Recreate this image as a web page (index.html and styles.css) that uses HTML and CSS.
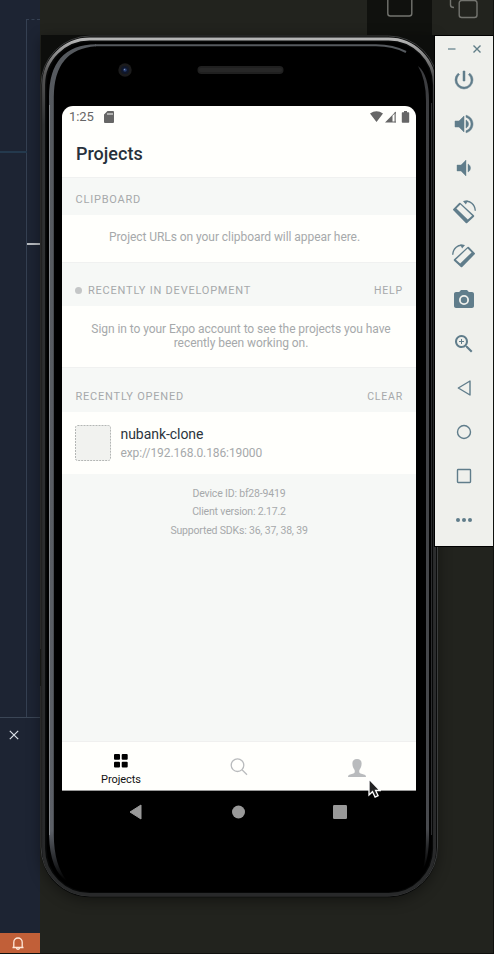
FILE: index.html
```html
<!DOCTYPE html>
<html lang="en">
<head>
<meta charset="utf-8">
<title>Emulator</title>
<link rel="stylesheet" href="styles.css">
</head>
<body>
<div class="desktop">
  <aside class="side">
    <div class="side-main"><div class="minimap"></div><i class="line"></i><i class="cursor-line"></i></div>
    <div class="side-panel">
      <svg class="close" width="10" height="10" viewBox="0 0 10 10"><path d="M.8.8l8.400 8.400M9.200.8L.8 9.200"/></svg>
    </div>
    <div class="side-status">
      <svg width="14" height="15" viewBox="0 0 14 15"><path d="M1.500 11.500h11M2.800 11.300V6.200a4.200 4.200 0 0 1 8.400 0v5.100M5.500 12.200c.3 1.600 2.700 1.600 3 0"/></svg>
    </div>
  </aside>
  <div class="topbar">
    <svg width="127" height="36" viewBox="0 0 127 36"><path class="dark" d="M0 0h65v36H0z"/><rect x="20.800" y="-8" width="24" height="24" rx="2.500"/><rect x="92.200" y="0.500" width="17.800" height="17" rx="2.500"/><path class="outline" d="M83.500 0v5q0 2.500 3.500 2.500"/></svg>
  </div>

  <main class="phone">
    <svg class="bezel" width="399" height="863" viewBox="0 0 399 863">
      <defs>
        <linearGradient id="top" x1="0" x2="0" y1="0" y2="1"><stop offset="0" stop-color="#b5b5b5"/><stop offset=".04" stop-color="#555"/><stop offset=".1" stop-color="#303233"/><stop offset="1" stop-color="#28292a"/></linearGradient>
        <linearGradient id="left" x1="0" x2="0" y1="0" y2="1"><stop offset="0" stop-color="#55595e"/><stop offset=".94" stop-color="#5c6067"/><stop offset="1" stop-color="#000"/></linearGradient>
        <linearGradient id="right" x1="0" x2="0" y1="0" y2="1"><stop offset="0" stop-color="#3c3d40"/><stop offset=".95" stop-color="#484a4e"/><stop offset="1" stop-color="#000"/></linearGradient>
      </defs>
      <path fill="#0d0e0c" d="M1 0h394v80H1z"/>
      <rect x=".7" y=".7" width="397" height="861.500" rx="49" fill="#070808"/>
      <rect x="1" y="1" width="396.500" height="860" rx="49" fill="none" stroke="#494a4a" stroke-width=".8"/>
      <rect x="3.600" y="4" width="391" height="855.500" rx="46" fill="none" stroke="url(#top)" stroke-width="3"/>
      <rect x="6.800" y="7" width="385" height="850" rx="43" fill="#000"/>
      <path d="M55 10.200H335Q353 10 366 17" fill="none" stroke="#55595e" stroke-width="2"/>
      <path d="M9 800V62Q9 10 56 9.200V11.200Q14 14 13.800 62V800Q14 830 27 846Q10 836 9 800Z" fill="url(#left)"/>
      <path d="M9.500 800V70" fill="none" stroke="#85898e" stroke-width="1"/>
      <path d="M378 31Q389 40 389 66V800Q389 824 383 834Q386 824 386 800V66Q386 44 378 31Z" fill="url(#right)"/>
      <path d="M391.500 68V800" stroke="#2c2d2f" stroke-width="1"/>
      <path d="M0 614V651" stroke="#171814" stroke-width="2"/>
      <circle cx="85" cy="35" r="6.700" fill="#1b1b1c"/><circle cx="85" cy="35" r="4" fill="#10172a"/><circle cx="85" cy="35" r="1.800" fill="#263d70"/><circle cx="84.500" cy="34.500" r=".7" fill="#8291b5"/>
      <rect x="157.500" y="31" width="86" height="8" rx="4" fill="#202020"/><rect x="159" y="33" width="83" height="4" rx="2" fill="#272727"/>
    </svg>

    <section class="screen">
      <div class="statusbar">
        <span>1:25</span>
        <svg class="sd" width="10" height="12" viewBox="0 0 10 12"><path fill-rule="evenodd" d="M3.500 0H9q1 0 1 1v10q0 1-1 1H1q-1 0-1-1V3.500zM3.500 2v2h1V2zm2 0v2h1V2zm2 0v2h1V2z"/></svg>
        <svg class="signals" width="40" height="12" viewBox="0 0 40 12"><path d="M0 2.500Q6.500-2 13 2.500L6.500 11zM15 11.500L25.800.5V2.600H24.700V10.400H25.800V11.500H15zM22.500 10.500H24.900V2.400L22.500 4.800z" fill-rule="evenodd"/><path d="M25.200 1v10.500" stroke="#666" stroke-width="1"/><path d="M34 0h3v1.300h1.500q.7 0 .7.700v9q0 .700-.7.700h-6q-.7 0-.7-.7V2q0-.7.7-.7H34z"/></svg>
      </div>
      <h1>Projects</h1>
      <div class="section s1"><span>CLIPBOARD</span></div>
      <p class="note n1">Project URLs on your clipboard will appear here.</p>
      <div class="section s2"><i class="dot"></i><span>RECENTLY IN DEVELOPMENT</span><a>HELP</a></div>
      <p class="note n2">Sign in to your Expo account to see the projects you have<br>recently been working on.</p>
      <div class="section s3"><span>RECENTLY OPENED</span><a>CLEAR</a></div>
      <div class="project">
        <svg width="36" height="36" viewBox="0 0 36 36"><rect x=".5" y=".5" width="35" height="35" rx="2" fill="#f1f2ef" stroke="#b3b6b4" stroke-dasharray="2 1"/></svg>
        <div><b>nubank-clone</b><small>exp://192.168.0.186:19000</small></div>
      </div>
      <div class="device"><p>Device ID: bf28-9419</p><p>Client version: 2.17.2</p><p>Supported SDKs: 36, 37, 38, 39</p></div>
      <nav class="tabs">
        <div class="tab active"><svg width="14" height="14" viewBox="0 0 14 14"><rect width="6" height="5.700" rx="1"/><rect x="7.700" width="6" height="5.700" rx="1"/><rect y="7.800" width="6" height="5.700" rx="1"/><rect x="7.700" y="7.800" width="6" height="5.700" rx="1"/></svg><span>Projects</span></div>
        <div class="tab search"><svg width="18" height="18" viewBox="0 0 18 18"><g fill="none" stroke="#b9bbbd" stroke-width="1.300"><circle cx="7.500" cy="7.200" r="6.300"/><path d="M12 11.700l5 5"/></g></svg></div>
        <div class="tab person"><svg width="18" height="18" viewBox="0 0 18 18"><path fill="#b9bbbd" d="M9 0C5.800 0 4.200 1.900 4.400 4.800c.1 2.500.8 4.200 1.900 5.600.6.800.7 2.800 0 3.600C5.600 15 2.200 15 .8 16 .2 16.500 0 17.200 0 18h18c0-.8-.2-1.500-.8-2-1.400-1-4.800-1-5.500-2-.7-.8-.6-2.800 0-3.600 1.100-1.400 1.800-3.100 1.900-5.600C13.800 1.900 12.200 0 9 0z"/></svg></div>
      </nav>
    </section>
    <div class="android-nav">
      <svg width="13" height="16" viewBox="0 0 13 16"><path d="M12 1v14L1 8z" stroke="#999" stroke-linejoin="round"/></svg>
      <svg width="14" height="14" viewBox="0 0 14 14"><circle cx="7.500" cy="7" r="6.500"/></svg>
      <svg width="14" height="14" viewBox="0 0 14 14"><rect width="14" height="14" rx="1.200"/></svg>
    </div>
  </main>

  <aside class="tools">
    <div class="window-controls"><svg width="34" height="10" viewBox="0 0 34 10"><path d="M0 5h7.500" stroke="#8ea3aa" stroke-width="1.800"/><path d="M25.500 1.500l7 7M32.500 1.500l-7 7" stroke="#607d87" stroke-width="1.400"/></svg></div>
    <div class="tool"><svg viewBox="0 0 24 24"><path d="M13 3h-2v10h2V3zm4.830 2.170-1.420 1.420A6.920 6.920 0 0 1 19 12a7 7 0 1 1-11.420-5.420L6.170 5.170A8.930 8.930 0 0 0 3 12a9 9 0 1 0 18 0c0-2.740-1.230-5.180-3.170-6.830z" stroke="#607d8b" stroke-width=".5"/></svg></div>
    <div class="tool"><svg viewBox="0 0 24 24"><path d="M3 9v6h4l5 5V4L7 9H3zm13.500 3c0-1.770-1.020-3.290-2.500-4.030v8.050c1.480-.73 2.500-2.250 2.500-4.020zM14 3.230v2.060c2.890.860 5 3.540 5 6.710s-2.110 5.850-5 6.710v2.060c4.010-.910 7-4.490 7-8.770s-2.990-7.860-7-8.770z" stroke="#607d8b" stroke-width=".5"/></svg></div>
    <div class="tool"><svg viewBox="0 0 24 24"><path d="M18.500 12c0-1.770-1.020-3.290-2.500-4.030v8.050c1.480-.73 2.500-2.250 2.500-4.020zM5 9v6h4l5 5V4L9 9H5z" stroke="#607d8b" stroke-width=".4"/></svg></div>
    <div class="tool"><svg viewBox="0 0 24 24"><path fill-rule="evenodd" d="M7.100 3Q7.800 2.300 8.500 3L21.900 15.300Q22.700 16 22 16.800L15.200 22.900Q14.500 23.500 13.800 22.900L1.300 10.300Q.6 9.600 1.300 8.900zM8.400 4.600L4.400 8.400L15.800 19.600L20.100 15.700z"/><path class="stroke" d="M12 1.700C18-.2 23 4.500 23.300 10.800"/><path d="M11 1.100l4.800-.6-1.900 4z"/></svg></div>
    <div class="tool"><svg viewBox="0 0 24 24"><g transform="matrix(-1 0 0 1 24 0)"><path fill-rule="evenodd" d="M7.100 3Q7.800 2.300 8.500 3L21.900 15.300Q22.700 16 22 16.800L15.200 22.900Q14.500 23.500 13.800 22.900L1.300 10.300Q.6 9.600 1.300 8.900zM8.400 4.600L4.400 8.400L15.800 19.600L20.100 15.700z"/><path class="stroke" d="M12 1.700C18-.2 23 4.500 23.300 10.800"/><path d="M11 1.100l4.800-.6-1.900 4z"/></g></svg></div>
    <div class="tool"><svg viewBox="0 0 24 24"><circle cx="12" cy="12" r="3.200"/><path d="M9 2 7.170 4H4c-1.100 0-2 .9-2 2v12c0 1.100.9 2 2 2h16c1.100 0 2-.9 2-2V6c0-1.100-.9-2-2-2h-3.170L15 2H9zm3 15a5 5 0 1 1 0-10 5 5 0 0 1 0 10z"/></svg></div>
    <div class="tool"><svg viewBox="0 0 24 24"><path d="M15.500 14h-.79l-.28-.27A6.500 6.500 0 1 0 13.730 14.430l.27.28v.79l5 4.990L20.490 19l-4.990-5zm-6 0a4.500 4.500 0 1 1 0-9 4.500 4.500 0 0 1 0 9zM12 10h-2v2H9v-2H7V9h2V7h1v2h2v1z"/></svg></div>
    <div class="tool"><svg viewBox="0 0 24 24"><path class="stroke" stroke-linejoin="round" d="M18 5v14L6.300 12z"/></svg></div>
    <div class="tool"><svg viewBox="0 0 24 24"><circle class="stroke" cx="12" cy="12" r="6.500"/></svg></div>
    <div class="tool"><svg viewBox="0 0 24 24"><rect class="stroke" x="5.500" y="5.500" width="13" height="13" rx=".7"/></svg></div>
    <div class="tool"><svg viewBox="0 0 24 24"><circle cx="6" cy="12" r="2"/><circle cx="12" cy="12" r="2"/><circle cx="18" cy="12" r="2"/></svg></div>
  </aside>
  <svg class="pointer" width="13" height="21" viewBox="0 0 13 21"><path d="M1 1v16l3.500-3.300 2.600 5.400 3-1.400-2.500-5.200H12z" fill="#222" stroke="#fff" stroke-width="1.300"/></svg>
</div>
</body>
</html>
```

FILE: styles.css
```css
* { box-sizing: border-box; }
body, h1, p { margin: 0; }
body { font-family: Roboto, sans-serif; }
svg { display: block; flex: none; }
.desktop { position: relative; width: 494px; height: 954px; overflow: hidden; background: #22231e; border-right: 1px solid #10110e; border-bottom: 1px solid #10110e; }
.side { width: 40px; height: 954px; display: flex; flex-direction: column; background: #1d2433; }
.side-main { position: relative; height: 718px; padding: 19px 0 0 26px; border-bottom: 1px solid #3b4656; }
.minimap { height: 698px; border-left: 1px solid #354052; border-top: 1px dashed #354052; }
.line { position: absolute; left: 0; top: 151px; width: 27px; height: 2px; background: #24394d; }
.cursor-line { position: absolute; left: 27px; top: 243px; width: 13px; height: 2px; background: #b8bbc0; }
.side-panel { flex: 1; padding: 12px 9px; }
.close { fill: none; stroke: #dce2e9; stroke-width: 1.2; }
.side-status { height: 21px; padding: 3px 11px; background: #c15f38; }
.side-status svg { fill: none; stroke: #ffe7d8; stroke-width: 1.3; }
.topbar { position: absolute; left: 367px; top: 0; }
.topbar rect, .topbar .outline { fill: none; stroke: #73746f; stroke-width: 1.4; }
.topbar .dark { fill: #10110e; }
.phone { position: absolute; left: 40px; top: 35px; width: 399px; height: 863px; padding: 71px 23px 0 22px; }
.bezel { position: absolute; left: 0; top: 0; filter: drop-shadow(0 3px 7px #0006); }
.screen { position: relative; height: 685px; display: flex; flex-direction: column; overflow: hidden; border-radius: 11px 11px 0 0; background: #fffffc; color: #a6a9ab; }
.statusbar { height: 21px; display: flex; align-items: center; padding: 0 6.5px 0 7px; color: #666; font-size: 13px; letter-spacing: -.1px; }
.statusbar svg { fill: #666; }
.sd { margin-left: 10.5px; }
.signals { margin-left: auto; }
h1 { height: 50px; padding-left: 14px; font-size: 18px; line-height: 54px; font-weight: 500; color: #27313b; }
.section { display: flex; align-items: flex-end; padding: 0 13px; background: #f6f8f6; border-top: 1px solid #f0f1f0; font-size: 11px; line-height: 14px; letter-spacing: .78px; }
.section span { margin-left: .5px; }
.section a { margin-left: auto; font-size: 10.5px; letter-spacing: .8px; }
.s1 { height: 38px; padding-bottom: 8px; }
.s2 { height: 44px; padding-bottom: 8px; }
.s3 { height: 45px; padding-bottom: 8px; }
.dot { width: 7px; height: 7px; margin: 0 5.5px 4px 0; border-radius: 50%; background: #c4c6c7; }
.note { text-align: center; font-size: 12px; line-height: 14px; letter-spacing: -.06px; }
.n1 { height: 47px; padding: 15px 9px 0 0; }
.n2 { height: 61px; padding: 16px 0 0 4px; }
.project { height: 62px; display: flex; gap: 9.5px; padding: 13px; }
.project b, .project small { display: block; }
.project b { font-size: 14px; line-height: 19px; font-weight: 400; letter-spacing: -.05px; color: #2c343d; }
.project small { font-size: 12px; line-height: 19.5px; letter-spacing: -.1px; }
.device { flex: 1; padding-top: 11px; background: #f6f8f6; text-align: center; font-size: 10.5px; line-height: 18.4px; letter-spacing: -.18px; }
.tabs { height: 50px; display: grid; grid-template-columns: repeat(3, 1fr); border-top: 1px solid #f0f0ef; border-bottom: 1px solid #999; }
.tab { display: flex; flex-direction: column; align-items: center; justify-content: center; color: #111; font-size: 11px; letter-spacing: -.05px; }
.active { justify-content: flex-start; padding-top: 12px; gap: 5px; }
.active span { line-height: 13px; }
.search { padding-top: 1px; }
.person { padding-top: 3px; }
.android-nav { position: relative; height: 42px; display: flex; justify-content: space-between; align-items: center; padding: 0 69px 0 67px; }
.android-nav svg { fill: #999; }
.tools { position: absolute; left: 434px; top: 35px; width: 60px; height: 512px; padding-right: 2px; border: 1px solid #000; border-right: 0; background: #eff0ec; }
.window-controls { height: 22px; padding: 8px 0 0 13px; }
.tool { height: 44px; display: flex; align-items: center; justify-content: center; }
.tool svg { width: 24px; height: 24px; fill: #607d8b; }
.tool .stroke { fill: none; stroke: #607d8b; stroke-width: 1.4; }
.pointer { position: absolute; left: 368px; top: 778px; }
```
